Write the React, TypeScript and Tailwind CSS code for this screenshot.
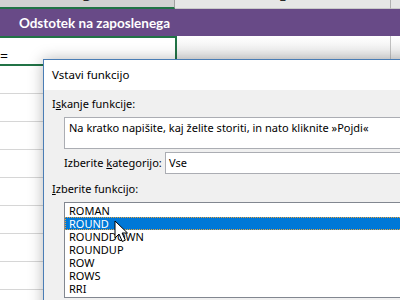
import React from "react";

const ui = { fontFamily: '"Noto Sans", "Open Sans", sans-serif' };

export default function App() {
  const items = ["ROMAN", "ROUND", "ROUNDDOWN", "ROUNDUP", "ROW", "ROWS", "RRI"];
  return (
    <div className="relative w-[400px] h-[300px] overflow-hidden bg-white" style={ui}>
      {/* spreadsheet */}
      <div className="flex flex-col">
        <div className="flex h-[9px]">
          <div className="w-[175px] h-[9px] bg-[#d2d2d2] border-b-2 border-[#217346] border-r border-r-[#a0a0a0] overflow-hidden flex justify-center">
            <span className="text-[13px] leading-[13px] mt-[-10px] text-[#2a2a2a]">D</span>
          </div>
          <div className="w-[216px] h-[9px] bg-[#e6e6e6] border-b border-[#c8c8c8] border-r border-r-[#b0b0b0] overflow-hidden flex justify-center">
            <span className="text-[13px] leading-[13px] mt-[-10px] text-[#2a2a2a]">E</span>
          </div>
          <div className="flex-1 h-[9px] bg-[#e6e6e6] border-b border-[#c8c8c8]" />
        </div>
        <div className="h-[27px] bg-[#684a87] flex items-center">
          <div
            className="w-[189px] text-center text-white font-bold text-[13.5px] leading-[18px] whitespace-nowrap"
            style={{ fontFamily: 'Lato, "Noto Sans", sans-serif' }}
          >
            Odstotek na zaposlenega
          </div>
        </div>
        <div className="flex h-[30px]">
          <div className="w-[177px] h-[30px] border-y-2 border-r-2 border-[#217346] bg-white flex items-end">
            <span className="text-[14px] leading-[14px] mb-[1px] text-black">=</span>
          </div>
          <div className="w-[214px] h-[30px] bg-gradient-to-b from-white to-[#e2e2e2] border-r border-[#c0c0c0]" />
          <div className="flex-1 bg-gradient-to-b from-white to-[#e2e2e2]" />
        </div>
        {Array.from({ length: 9 }).map((_, i) => (
          <div key={i} className="h-[28px] border-b border-[#d6d6d6]" />
        ))}
      </div>

      {/* dialog */}
      <div className="absolute left-[43px] top-[59px] w-[420px] h-[260px] bg-[#f0f0f0] border-t border-l border-[#4a7db5] shadow-[0_0_14px_rgba(0,0,0,0.28)] flex flex-col">
        <div className="h-[30px] bg-white flex items-center pl-[8px] text-[11.5px] text-black whitespace-nowrap">
          Vstavi funkcijo
        </div>
        <div className="flex flex-col pt-[6px] pl-[8px] text-[11px] leading-[16px] text-black whitespace-nowrap">
          <div>
            I<span className="underline">s</span>kanje funkcije:
          </div>
          <div className="ml-[12px] mt-[5px] h-[32px] bg-white border border-[#abadb3] pl-[4px] pt-[2px]">
            Na kratko napišite, kaj želite storiti, in nato kliknite »Pojdi«
          </div>
          <div className="ml-[12px] mt-[3px] flex items-center h-[22px]">
            <span className="w-[101px] shrink-0">
              Izberite <span className="underline">k</span>ategorijo:
            </span>
            <div className="flex-1 h-[22px] bg-white border border-[#abadb3] pl-[3px] flex items-center">Vse</div>
          </div>
          <div className="mt-[7px]">
            <span className="underline">I</span>zberite funkcijo:
          </div>
          <div className="ml-[12px] mt-[5px] h-[96px] bg-white border border-[#828790] pt-[1px] flex flex-col text-[11px]">
            {items.map((it) =>
              it === "ROUND" ? (
                <div
                  key={it}
                  className="h-[13px] leading-[11px] bg-[#0078d7] text-white pl-[3px] border border-dotted border-[#e8a33c]"
                >
                  {it}
                </div>
              ) : (
                <div key={it} className="h-[13px] leading-[13px] pl-[4px]">
                  {it}
                </div>
              )
            )}
          </div>
        </div>
      </div>

      {/* mouse cursor */}
      <svg
        className="absolute left-[114px] top-[220px]"
        width="15"
        height="24"
        viewBox="0 0 15 24"
      >
        <path
          d="M1 1 L1 18 L5 14 L8.3 21.5 L11.3 20.2 L8.1 13 L13.5 13 Z"
          fill="white"
          stroke="black"
          strokeWidth="1"
          strokeLinejoin="miter"
        />
      </svg>
    </div>
  );
}
